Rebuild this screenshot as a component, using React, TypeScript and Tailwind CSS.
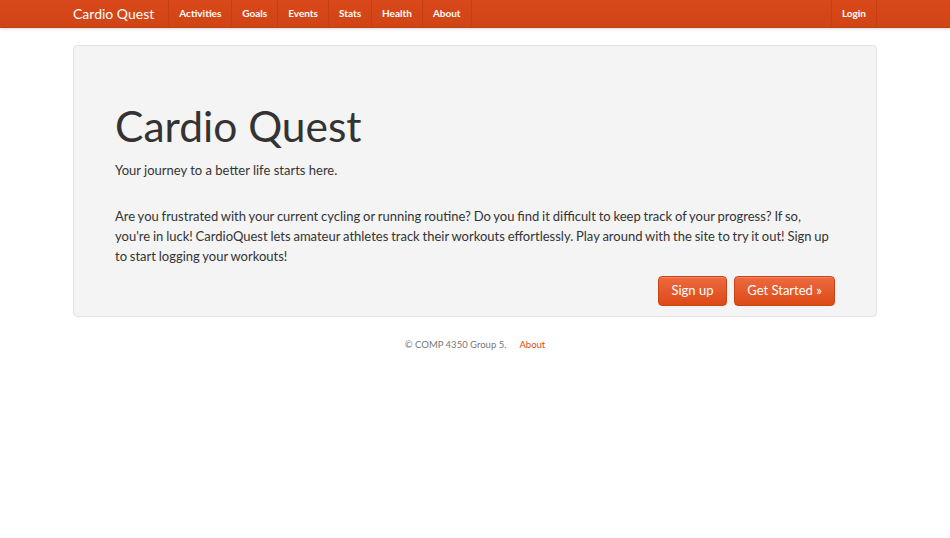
import React from "react";

const navLinks = ["Activities", "Goals", "Events", "Stats", "Health", "About"];

const App = () => {
  return (
    <div className="min-h-[538px] bg-white text-[#333333]" style={{ fontFamily: "Lato, 'Open Sans', sans-serif" }}>
      {/* navbar */}
      <header className="h-[28px] bg-gradient-to-b from-[#d9471a] to-[#d04515] border-b border-[#c13e12] shadow-[0_1px_3px_rgba(0,0,0,0.15)]">
        <div className="mx-[73px] flex h-full items-stretch">
          <a className="flex items-center pr-[14px] text-[14px] text-white">Cardio Quest</a>
          <nav className="flex items-stretch border-l border-[#c5400f]">
            {navLinks.map((l) => (
              <a
                key={l}
                className="flex items-center border-r border-[#c5400f] px-[10px] text-[10px] font-bold text-white"
              >
                {l}
              </a>
            ))}
          </nav>
          <nav className="ml-auto flex items-stretch border-l border-[#c5400f]">
            <a className="flex items-center border-r border-[#c5400f] px-[10px] text-[10px] font-bold text-white">
              Login
            </a>
          </nav>
        </div>
      </header>

      <main className="mx-[73px] mt-[17px]">
        <section className="rounded-[4px] border border-[#e3e3e3] bg-[#f4f4f4] px-[41px] pt-[54px] pb-[10px]">
          <h1 className="text-[42.5px] leading-[52px] text-[#333333]">Cardio Quest</h1>
          <p className="mt-[8px] text-[13px] leading-[20px]">Your journey to a better life starts here.</p>
          <p className="mt-[26px] text-[13px] leading-[20px] [word-spacing:-0.5px]">
            Are you frustrated with your current cycling or running routine? Do you find it difficult to keep track of
            your progress? If so, you're in luck! CardioQuest lets amateur athletes track their workouts effortlessly.
            Play around with the site to try it out! Sign up to start logging your workouts!
          </p>
          <div className="mt-[10px] flex justify-end gap-[7px]">
            <button className="h-[30px] w-[69px] rounded-[4px] border border-[#c94413] bg-gradient-to-b from-[#ed6a3e] to-[#dd4814] text-[13px] text-white shadow-[inset_0_1px_0_rgba(255,255,255,0.2)]">
              Sign up
            </button>
            <button className="h-[30px] w-[101px] rounded-[4px] border border-[#c94413] bg-gradient-to-b from-[#ed6a3e] to-[#dd4814] text-[13px] text-white shadow-[inset_0_1px_0_rgba(255,255,255,0.2)]">
              Get Started »
            </button>
          </div>
        </section>

        <footer className="mt-[21px] flex justify-center gap-[13px] text-[9.5px] leading-[14px] text-[#777777]">
          <span>© COMP 4350 Group 5.</span>
          <a className="text-[#dd4814]">About</a>
        </footer>
      </main>
    </div>
  );
};

export default App;
